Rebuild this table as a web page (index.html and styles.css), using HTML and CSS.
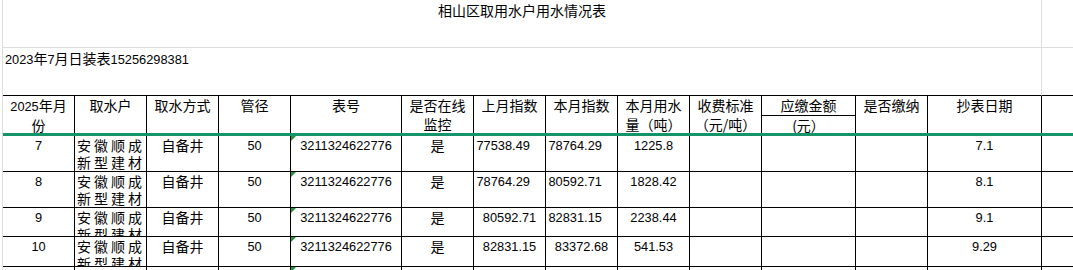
FILE: index.html
```html
<!DOCTYPE html>
<html lang="zh-CN">
<head>
<meta charset="utf-8">
<title>相山区取用水户用水情况表</title>
<link rel="stylesheet" href="styles.css">
</head>
<body>
<div class="sheet">
  <div class="c title">相山区取用水户用水情况表</div>
  <div class="c r1x"></div>
  <div class="c note"><span class="n">2023</span>年<span class="n">7</span>月日装表<span class="n">15256298381</span></div>
  <div class="c r2x"></div>

  <div class="c h tall"><span class="n">2025</span>年月<br>份</div>
  <div class="c h tall">取水户</div>
  <div class="c h tall">取水方式</div>
  <div class="c h tall">管径</div>
  <div class="c h tall">表号</div>
  <div class="c h tall">是否在线<br>监控</div>
  <div class="c h tall">上月指数</div>
  <div class="c h tall">本月指数</div>
  <div class="c h tall">本月用水<br>量（吨）</div>
  <div class="c h tall">收费标准<br>（元/吨）</div>
  <div class="c h top">应缴金额</div>
  <div class="c h tall">是否缴纳</div>
  <div class="c h tall">抄表日期</div>
  <div class="c h tall last"></div>
  <div class="c h">(元）</div>

  <div class="freeze"></div>

  <div class="c d ctr n">7</div>
  <div class="c d co">安徽顺成<br>新型建材</div>
  <div class="c d ctr">自备井</div>
  <div class="c d ctr n">50</div>
  <div class="c d ctr n tri">3211324622776</div>
  <div class="c d ctr">是</div>
  <div class="c d lft n">77538.49</div>
  <div class="c d lft n">78764.29</div>
  <div class="c d ctr n">1225.8</div>
  <div class="c d"></div>
  <div class="c d"></div>
  <div class="c d"></div>
  <div class="c d ctr n">7.1</div>
  <div class="c d last"></div>

  <div class="c d ctr n">8</div>
  <div class="c d co">安徽顺成<br>新型建材</div>
  <div class="c d ctr">自备井</div>
  <div class="c d ctr n">50</div>
  <div class="c d ctr n tri">3211324622776</div>
  <div class="c d ctr">是</div>
  <div class="c d lft n">78764.29</div>
  <div class="c d lft n">80592.71</div>
  <div class="c d ctr n">1828.42</div>
  <div class="c d"></div>
  <div class="c d"></div>
  <div class="c d"></div>
  <div class="c d ctr n">8.1</div>
  <div class="c d last"></div>

  <div class="c d ctr n">9</div>
  <div class="c d co">安徽顺成<br>新型建材</div>
  <div class="c d ctr">自备井</div>
  <div class="c d ctr n">50</div>
  <div class="c d ctr n tri">3211324622776</div>
  <div class="c d ctr">是</div>
  <div class="c d ctr n">80592.71</div>
  <div class="c d lft n">82831.15</div>
  <div class="c d ctr n">2238.44</div>
  <div class="c d"></div>
  <div class="c d"></div>
  <div class="c d"></div>
  <div class="c d ctr n">9.1</div>
  <div class="c d last"></div>

  <div class="c d ctr n">10</div>
  <div class="c d co">安徽顺成<br>新型建材</div>
  <div class="c d ctr">自备井</div>
  <div class="c d ctr n">50</div>
  <div class="c d ctr n tri">3211324622776</div>
  <div class="c d ctr">是</div>
  <div class="c d ctr n">82831.15</div>
  <div class="c d ctr n">83372.68</div>
  <div class="c d ctr n">541.53</div>
  <div class="c d"></div>
  <div class="c d"></div>
  <div class="c d"></div>
  <div class="c d ctr n">9.29</div>
  <div class="c d last"></div>

  <div class="c d ctr n">11</div>
  <div class="c d co">安徽顺成<br>新型建材</div>
  <div class="c d ctr">自备井</div>
  <div class="c d ctr n">50</div>
  <div class="c d ctr n tri">3211324622776</div>
  <div class="c d ctr">是</div>
  <div class="c d ctr n">83372.68</div>
  <div class="c d ctr n">84012.30</div>
  <div class="c d ctr n">639.62</div>
  <div class="c d"></div>
  <div class="c d"></div>
  <div class="c d"></div>
  <div class="c d ctr n">10.29</div>
  <div class="c d last"></div>
</div>
</body>
</html>
```

FILE: styles.css
```css
html, body {
  margin: 0;
  padding: 0;
  background: #ffffff;
  overflow: hidden;
}

body {
  font-family: "Noto Sans CJK SC", "Noto Sans", sans-serif;
  font-size: 14px;
  color: #000000;
}

.sheet {
  margin-left: 2px;
  border-left: 1px solid #dedede;
  width: 1070px;
  height: 270px;
  overflow: hidden;
  display: grid;
  grid-template-columns: 72px 72px 72px 72px 111px 72px 72px 72px 72px 72px 94px 72px 114px minmax(0, 1fr);
  grid-template-rows: 48px 48px 20px 17px 3px 36px 36px 29px 30px 36px;
}

.c {
  box-sizing: border-box;
  overflow: hidden;
  white-space: nowrap;
  min-width: 0;
}

.n {
  font-family: "Liberation Sans", Arial, sans-serif;
  font-size: 12.8px;
}

.title {
  grid-column: span 13;
  text-align: center;
  line-height: 18px;
  padding-top: 1px;
  border-right: 1px solid #dedede;
  border-bottom: 1px solid #dedede;
}

.r1x {
  border-bottom: 1px solid #dedede;
}

.note {
  grid-column: span 13;
  line-height: 18px;
  padding-top: 1px;
  padding-left: 2px;
  border-right: 1px solid #dedede;
  border-bottom: 1px solid #000000;
}

.r2x {
  border-bottom: 1px solid #000000;
}

.h {
  text-align: center;
  line-height: 19px;
  border-right: 1px solid #000000;
}

.h.tall {
  grid-row: span 2;
}

.h.top {
  border-bottom: 1px solid #000000;
}

.freeze {
  grid-column: 1 / -1;
  background: #15946a;
}

.d {
  line-height: 17px;
  padding-top: 1px;
  border-right: 1px solid #000000;
  border-bottom: 1px solid #000000;
}

.last {
  border-right: none;
}

.ctr {
  text-align: center;
}

.lft {
  text-align: left;
  padding-left: 2.5px;
}

.co {
  padding-left: 2px;
  letter-spacing: 3px;
}

.tri {
  position: relative;
}

.tri::before {
  content: "";
  position: absolute;
  left: 0;
  top: 0;
  width: 0;
  height: 0;
  border-top: 5px solid #1f9340;
  border-right: 5px solid transparent;
}
```
